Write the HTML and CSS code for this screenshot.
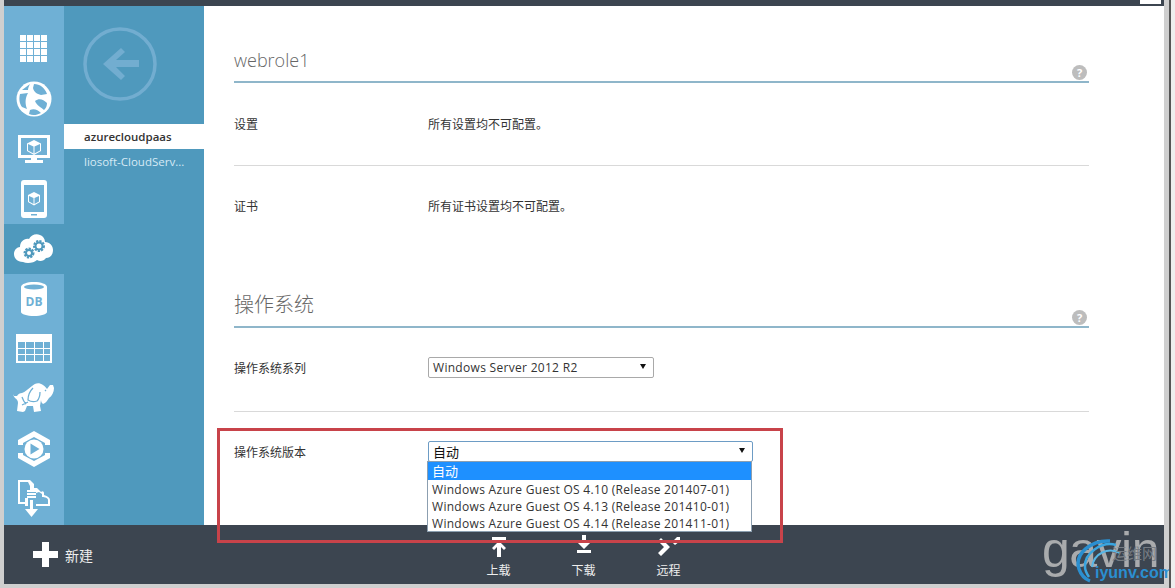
FILE: index.html
```html
<!DOCTYPE html>
<html lang="zh">
<head>
<meta charset="utf-8">
<title>webrole1</title>
<link rel="stylesheet" href="styles.css">
</head>
<body>
<div class="frame">
  <div class="topbar"></div>
  <div class="main">
    <nav class="rail">
      <div class="rail-item"><svg width="28" height="28" viewBox="0 0 28 28"><path fill="#fff" d="M0 0h6v6H0zM7 0h6v6H7zM14 0h6v6h-6zM21 0h6v6h-6zM0 7h6v6H0zM7 7h6v6H7zM14 7h6v6h-6zM21 7h6v6h-6zM0 14h6v6H0zM7 14h6v6H7zM14 14h6v6h-6zM21 14h6v6h-6zM0 21h6v6H0zM7 21h6v6H7zM14 21h6v6h-6zM21 21h6v6h-6z"/></svg></div>
      <div class="rail-item"><svg width="36" height="36" viewBox="7 7 36 36"><circle cx="25" cy="25" r="17.500" fill="#fff"/><path fill="#6fb0d5" d="M13 16l8-6c-1 2-2 4-2 6zM25 10c6 0 11 4 13 10l-6 1c-4-1-7-3-8-7zM11 20l8-1c-3 5-3 11-1 16l-5-2c-3-4-3-9-2-13zM26 27c4-3 8-2 12 2 0 3-1 5-3 7-3-3-7-4-9-9zM21 36c4-2 8 0 11 3-4 2-8 3-12 1z"/></svg></div>
      <div class="rail-item"><svg width="34" height="30" viewBox="0 0 34 30"><path fill="#fff" fill-rule="evenodd" d="M1 1h32v23H20v2h6v3H8v-3h6v-2H1zM4 4v17h26V4z"/><path fill="#fff" d="M17 6l7 3.500v7.500l-7 4-7-4V9.500z"/><path fill="#6fb0d5" d="M16.500 12.500v7l-5.500-3v-6.500zM17.500 12.500l5.500-2.500v6.500l-5.500 3z"/></svg></div>
      <div class="rail-item"><svg width="26" height="38" viewBox="0 0 26 38"><path fill="#fff" fill-rule="evenodd" d="M3 0h20a3 3 0 0 1 3 3v32a3 3 0 0 1-3 3H3a3 3 0 0 1-3-3V3a3 3 0 0 1 3-3zM3 5v27h20V5zM10 34v1.500h6V34z"/><path fill="#fff" d="M13 12l6 3v7l-6 3.500L7 22v-7z"/><path fill="#6fb0d5" d="M12.500 18v6l-4.500-2.500V16zM13.500 18l4.500-2v5.500l-4.500 2.500z"/></svg></div>
      <div class="rail-item rail-active"><svg width="40" height="32" viewBox="0 0 40 32"><path fill="#fff" d="M9 29C3 29 0 25 0 21c0-4 3-7 6-7 0-5 4-9 9-8 2-4 7-6 11-4 3 1 5 4 5 7 5 0 8 4 8 8 0 5-3 8-7 8-2 3-6 4-9 2-3 3-10 4-14 2z"/><circle cx="15" cy="20" r="4" fill="none" stroke="#4f99bd" stroke-width="3" stroke-dasharray="2 1"/><circle cx="15" cy="20" r="3" fill="none" stroke="#4f99bd" stroke-width="2"/><circle cx="25" cy="13" r="4.500" fill="none" stroke="#4f99bd" stroke-width="3" stroke-dasharray="2 1"/><circle cx="25" cy="13" r="3.500" fill="none" stroke="#4f99bd" stroke-width="2"/></svg></div>
      <div class="rail-item"><svg width="26" height="34" viewBox="0 0 26 34"><path fill="#fff" d="M0 5C0 2 6 0 13 0s13 2 13 5v25c0 2-6 4-13 4S0 32 0 30z"/><ellipse cx="13" cy="5" rx="10" ry="2.500" fill="#6fb0d5"/><text class="db" x="13" y="24" text-anchor="middle">DB</text></svg></div>
      <div class="rail-item"><svg width="36" height="30" viewBox="0 0 36 30"><path fill="#fff" fill-rule="evenodd" d="M0 0h36v29H0zM2 8v6h7V8zM10 8v6h8V8zM19 8v6h8V8zM28 8v6h6V8zM2 15v5h7v-5zM10 15v5h8v-5zM19 15v5h8v-5zM28 15v5h6v-5zM2 21v6h7v-6zM10 21v6h8v-6zM19 21v6h8v-6zM28 21v6h6v-6z"/></svg></div>
      <div class="rail-item"><svg width="42" height="36" viewBox="3 9 42 36"><path fill="#fff" d="M4 24l3 0c1-2 3-3 5-3 3-1 6-4 10-7 3-3 7-4 11-1 2 1 3 3 4 4 1-1 2-3 3-4h3l1 3c0 4-2 8-5 10-2 3-3 5-6 6-1-1-2-2-2-4l-1 6 1 5-7 1-1-6-6 0-2 5-2 1-6-1 1-8c0-2-1-4-3-5l-2-3-1-2z"/><path fill="none" stroke="#6fb0d5" stroke-width="1.300" d="M23 16c-3 3-5 8-5 12 3 2 6 2 9 1 2-2 3-6 3-9M18 30l-6 3M12 25c1 3 2 5 4 7M36 18l-1 1"/></svg></div>
      <div class="rail-item"><svg width="32" height="36" viewBox="0 0 32 36"><path fill="#fff" d="M16 0l16 9v5h-5V12L16 6 5 12v2H0V9zM0 22h5v2l11 6 11-6v-2h5v5l-16 9-16-9z"/><circle cx="16" cy="18" r="9.500" fill="#fff"/><path fill="#6fb0d5" d="M12.500 12.500l9 5.500-9 5.500z"/></svg></div>
      <div class="rail-item"><svg width="32" height="38" viewBox="0 0 32 38"><path fill="#fff" fill-rule="evenodd" d="M0 0h12l4 4v4h3l4 4c2-2 3 0 3 1v2c4 1 6 3 6 5v6H18v-2h12v-4c0-2-3-3-6-3v-3l-3-2-3 1v-1h-6v4h-2v10H7v-2H0zM2 2v20h5v-4h5V6L10 2z"/><path fill="#fff" d="M9 10h9v2H9zM9 13h9v2H9zM9 16h9v2H9zM12 20h3v9h5l-6.500 8L7 29h5z"/></svg></div>
    </nav>
    <aside class="subnav">
      <div class="back"><svg width="74" height="74" viewBox="0 0 74 74"><circle cx="37" cy="37" r="35" fill="none" stroke="#72add0" stroke-width="3.500"/><path fill="#72add0" d="M38 21l-18 16 18 16 4-4-9-9h23v-7H33l9-8z"/></svg></div>
      <div class="sub-item sub-current">azurecloudpaas</div>
      <div class="sub-item">liosoft-CloudServ...</div>
    </aside>
    <main class="content">
      <section class="section section-first">
        <h2 class="heading heading-latin">webrole1</h2>
        <div class="help">?</div>
        <div class="row row-a"><div class="label">设置</div><div class="value">所有设置均不可配置。</div></div>
        <div class="row row-b"><div class="label">证书</div><div class="value">所有证书设置均不可配置。</div></div>
      </section>
      <section class="section section-os">
        <h2 class="heading">操作系统</h2>
        <div class="help">?</div>
        <div class="row row-c"><div class="label">操作系统系列</div><div class="value"><div class="select select-short"><span>Windows Server 2012 R2</span><i class="arrow"></i></div></div></div>
        <div class="row row-d"><div class="label">操作系统版本</div><div class="value"><div class="select select-open"><span>自动</span><i class="arrow"></i></div></div></div>
      </section>
    </main>
  </div>
  <footer class="bottombar">
    <div class="new"><svg width="25" height="25" viewBox="0 0 25 25"><path fill="#fff" d="M9 0h7v9h9v7h-9v9H9v-9H0V9h9z"/></svg><span>新建</span></div>
    <div class="actions">
      <div class="action"><svg width="20" height="22" viewBox="0 0 20 22"><path fill="#fff" d="M3 2h14v3H3zM10 6l7 7-2 2-3-3v10H8V12l-3 3-2-2z"/></svg><span>上载</span></div>
      <div class="action"><svg width="20" height="22" viewBox="0 0 20 22"><path fill="#fff" d="M8 0h4v7l3-2 2 2-7 7-7-7 2-2 3 2zM3 15h14v3H3z"/></svg><span>下载</span></div>
      <div class="action"><svg width="24" height="22" viewBox="0 0 24 22"><path fill="#fff" d="M1 6l3-3 9 9-9 9-3-3 6-6zM23 2v4l-5 4-3-3 5-5z"/></svg><span>远程</span></div>
    </div>
  </footer>
  <div class="options">
    <div class="option option-on">自动</div>
    <div class="option">Windows Azure Guest OS 4.10 (Release 201407-01)</div>
    <div class="option">Windows Azure Guest OS 4.13 (Release 201410-01)</div>
    <div class="option">Windows Azure Guest OS 4.14 (Release 201411-01)</div>
  </div>
  <div class="redbox"></div>
  <div class="corner"></div>
  <div class="wm-gavin">gavin</div>
  <svg class="wm-swirl" width="50" height="46" viewBox="0 0 50 46"><path fill="none" stroke="#2b8fd0" stroke-width="3.500" d="M36 2C18 1 0 14 5 30c2 6 6 10 11 12"/><path fill="none" stroke="#3aa5e0" stroke-width="2.500" d="M42 6C28 2 10 14 11 28c0 4 2 7 4 10"/><path fill="none" stroke="#58b6e6" stroke-width="2" d="M46 14C34 8 20 14 18 28"/></svg>
  <div class="wm-cn">运维网</div>
  <div class="wm-site">iyunv.com</div>
</div>
</body>
</html>
```

FILE: styles.css
```css
* { box-sizing: border-box; }
html, body { margin: 0; padding: 0; }
body { width: 1175px; height: 588px; overflow: hidden; background: #cfcfcf; font-family: "Noto Sans CJK SC", "Open Sans", sans-serif; }
.frame { position: relative; width: 1175px; height: 588px; padding: 0 11px 4px 4px; display: flex; flex-direction: column; }
.frame::after { content: ""; position: absolute; top: 0; bottom: 0; right: 0; width: 4px; border-left: 2px solid #555; background: #eee; }
.topbar { height: 6px; background: #3c4550; flex: none; }
.main { flex: 1; display: flex; min-height: 0; }
.rail { width: 60px; flex: none; background: #6fb0d5; display: flex; flex-direction: column; padding-top: 18px; }
.rail-item { height: 50px; display: flex; align-items: center; justify-content: center; flex: none; }
.rail-item svg { display: block; }
.rail-active { background: #4f99bd; }
.db { font: bold 12px "Open Sans", sans-serif; fill: #6fb0d5; }
.subnav { width: 140px; flex: none; background: #4f99bd; color: #fff; font-size: 12px; }
.back { padding: 21px 0 0 19px; height: 118px; }
.back svg { display: block; }
.sub-item { height: 25px; line-height: 25px; padding-left: 20px; font-family: "Open Sans", sans-serif; font-size: 11.500px; color: #d6eaf5; white-space: nowrap; }
.sub-current { background: #fff; color: #333; font-weight: 600; }
.content { flex: 1; background: #fff; padding-left: 30px; color: #333; }
.section { position: relative; width: 855px; }
.section-first { padding-top: 39px; height: 276px; }
.heading { margin: 0; height: 38px; font-weight: 300; font-size: 18px; line-height: 30px; color: #666; border-bottom: 2px solid #8fb6ca; font-family: "Noto Sans CJK SC", sans-serif; }
.heading-latin { font-family: "Open Sans", sans-serif; font-weight: 300; }
.help { position: absolute; right: 2px; width: 15px; height: 15px; border-radius: 50%; background: #bdbdbd; color: #fff; font: bold 11px/15px "Open Sans", sans-serif; text-align: center; }
.section-first .help { top: 59px; }
.section-os .help { top: 28px; }
.row { display: flex; font-size: 12px; line-height: 18px; }
.label { width: 194px; flex: none; }
.row-a { height: 83px; padding-top: 32px; border-bottom: 1px solid #d9d9d9; }
.row-b { padding-top: 31px; }
.section-os { padding-top: 0; }
.section-os .heading { height: 46px; line-height: 44px; font-size: 20px; }
.row-c { height: 84px; padding-top: 31px; border-bottom: 1px solid #d9d9d9; }
.row-d { padding-top: 31px; }
.select { position: relative; display: flex; align-items: center; height: 21px; border: 1px solid #a9a9a9; border-radius: 2px; padding-left: 4px; font-size: 12px; font-family: "Open Sans", "Noto Sans CJK SC", sans-serif; letter-spacing: 0.300px; background: #fff; color: #333; }
.select-short { width: 226px; margin-top: -2px; }
.select-open { width: 325px; border-color: #6d9cc5; margin-top: -2px; color: #111; font-size: 13px; letter-spacing: 0; }
.arrow { position: absolute; right: 7px; top: 6px; width: 0; height: 0; border: 3.500px solid transparent; border-top: 5px solid #111; border-bottom: 0; }
.bottombar { height: 59px; flex: none; background: #3c4550; display: flex; color: #fff; position: relative; }
.new { display: flex; align-items: center; gap: 7px; padding-left: 29px; font-size: 14px; color: #eee; }
.new svg { display: block; }
.actions { position: absolute; left: 452px; top: 10px; display: flex; }
.action { width: 85px; display: flex; flex-direction: column; align-items: center; font-size: 12px; line-height: 16px; color: #eee; gap: 5px; }
.action svg { display: block; }
.options { position: absolute; left: 427px; top: 461px; width: 325px; height: 71px; border: 1px solid #8c9fb0; background: #fff; font: 12px/19px "Open Sans", "Noto Sans CJK SC", sans-serif; letter-spacing: 0.300px; color: #333; white-space: nowrap; }
.option { padding-left: 4px; height: 17px; }
.option-on { background: #1e90ff; color: #fff; height: 18px; font-size: 13px; line-height: 18px; letter-spacing: 0; }
.redbox { position: absolute; left: 217px; top: 428px; width: 566px; height: 115px; border: 3px solid #c8434a; }
.corner { position: absolute; top: 0; left: 1140px; width: 21px; height: 4px; background: #fff; }
.wm-gavin { position: absolute; left: 1042px; top: 520px; font: 300 50px/60px "Liberation Sans", sans-serif; color: #a9abad; letter-spacing: -0.500px; }
.wm-swirl { position: absolute; left: 1074px; top: 539px; }
.wm-cn { position: absolute; left: 1112px; top: 544px; font-size: 15px; line-height: 18px; color: #777d84; }
.wm-site { position: absolute; left: 1095px; top: 565px; font: bold 16px/16px "Liberation Sans", sans-serif; color: #2b8fd0; }
```
